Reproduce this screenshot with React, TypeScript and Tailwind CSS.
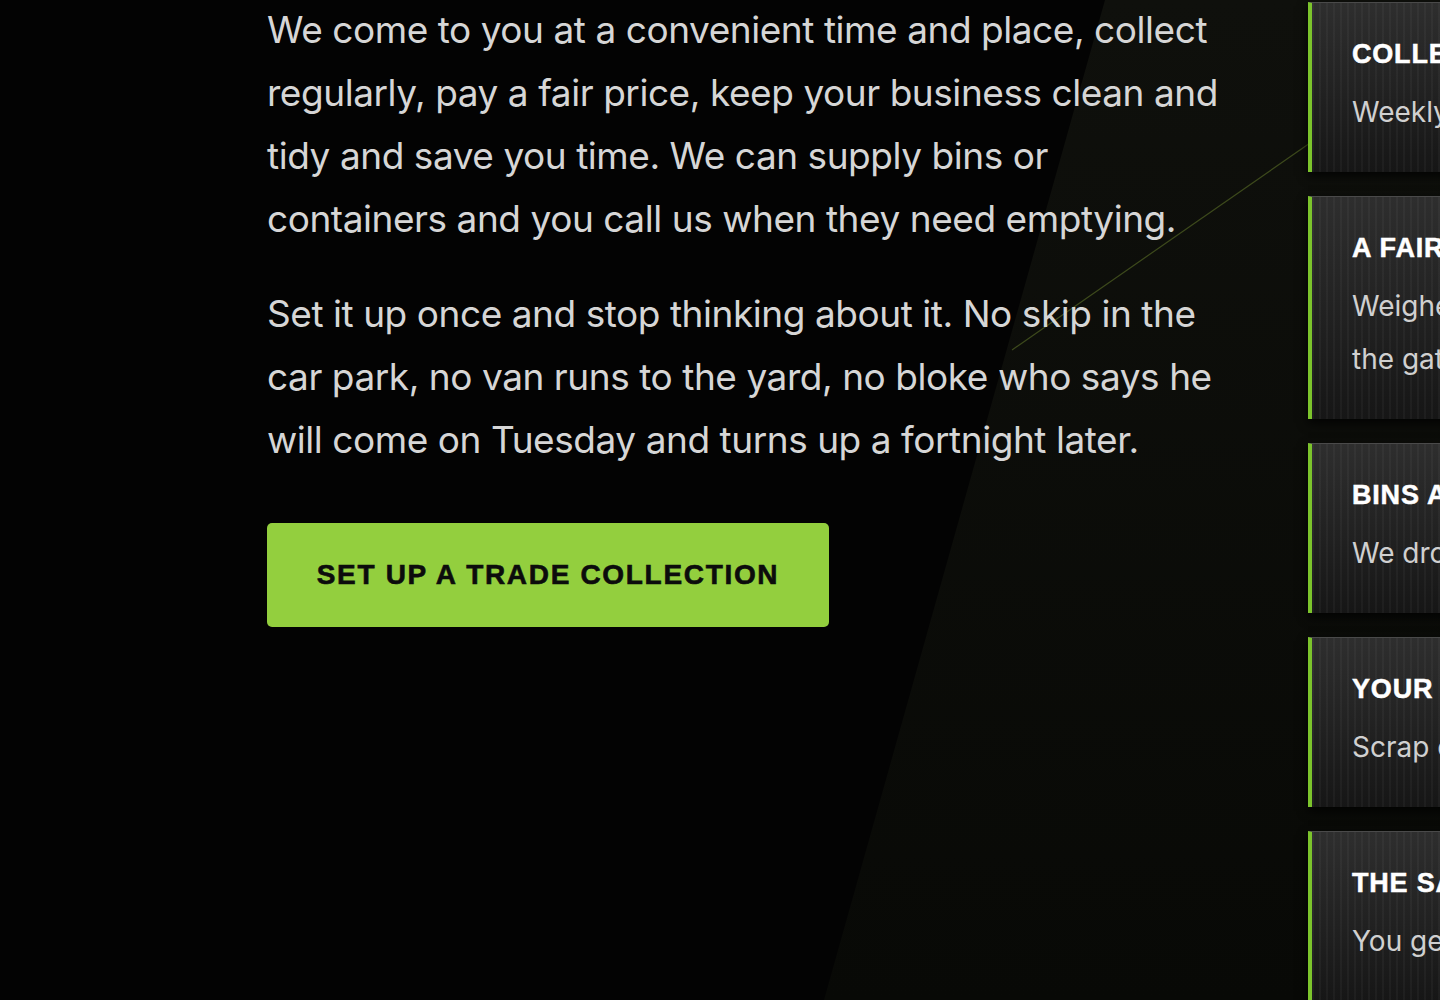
const cards = [
  { title: "Collections on your schedule", lines: ["Weekly, fortnightly or on call."] },
  { title: "A fair price, every time", lines: ["Weighed on certified scales at", "the gate, paid the same day."] },
  { title: "Bins and containers", lines: ["We drop them off for free."] },
  { title: "Your paperwork sorted", lines: ["Scrap certificates on every job."] },
  { title: "The same crew each visit", lines: ["You get a driver who knows you."] },
];

export default function App() {
  return (
    <div className="relative w-[1440px] h-[1000px] overflow-hidden bg-[#030303] font-['Inter','Liberation_Sans',sans-serif]">
      {/* background wedge + accent line */}
      <svg className="absolute inset-0" width="1440" height="1000" viewBox="0 0 1440 1000">
        <defs>
          <linearGradient id="wedge" x1="0" y1="0" x2="0" y2="1">
            <stop offset="0" stopColor="#0f100c" />
            <stop offset="1" stopColor="#080906" />
          </linearGradient>
        </defs>
        <polygon points="1105,0 1440,0 1440,1000 824,1000" fill="url(#wedge)" />
        <line x1="1012" y1="350" x2="1310" y2="143" stroke="#3d4a1c" strokeWidth="1.2" />
      </svg>

      <div className="relative flex">
        <div className="ml-[267px] w-[960px] shrink-0 -mt-[2px]">
          <p className="text-[37px] leading-[63px] text-[#d6d6d6] tracking-[-0.012em]">
            We come to you at a convenient time and place, collect regularly, pay a fair price, keep your business clean and tidy and save you time. We can supply bins or containers and you call us when they need emptying.
          </p>
          <p className="mt-[32px] text-[37px] leading-[63px] text-[#d6d6d6] tracking-[-0.012em]">
            Set it up once and stop thinking about it. No skip in the car park, no van runs to the yard, no bloke who says he will come on Tuesday and turns up a fortnight later.
          </p>
          <button className="mt-[52px] w-[562px] h-[104px] rounded-[5px] bg-[#93cf3e] text-[#0c0c0c] font-['Liberation_Sans',sans-serif] font-bold text-[28px] tracking-[0.06em] uppercase [-webkit-text-stroke:0.6px_#0c0c0c]">
            Set up a trade collection
          </button>
        </div>

        <div className="ml-[81px] mt-[2px] flex flex-col gap-[24px] shrink-0">
          {cards.map((c) => (
            <div
              key={c.title}
              className="w-[480px] border-l-[4px] border-[#7cc42c] border-t border-t-[#4a4a4a] shadow-[0_4px_10px_rgba(0,0,0,0.8)] bg-[image:repeating-linear-gradient(90deg,rgba(255,255,255,0.035)_0px,rgba(255,255,255,0.035)_2px,transparent_2px,transparent_7px),linear-gradient(180deg,#2e2e2e,#161616)] pl-[40px] pr-[30px] pt-[35px] pb-[33px]"
            >
              <h3 className="font-['Liberation_Sans',sans-serif] font-bold text-[27px] leading-[32px] tracking-[0.03em] uppercase text-white whitespace-nowrap [-webkit-text-stroke:0.5px_#fff]">
                {c.title}
              </h3>
              <p className="mt-[16px] text-[28px] leading-[53px] text-[#d0d0d0]">
                {c.lines.map((l) => (
                  <span key={l} className="block whitespace-nowrap">
                    {l}
                  </span>
                ))}
              </p>
            </div>
          ))}
        </div>
      </div>
    </div>
  );
}
